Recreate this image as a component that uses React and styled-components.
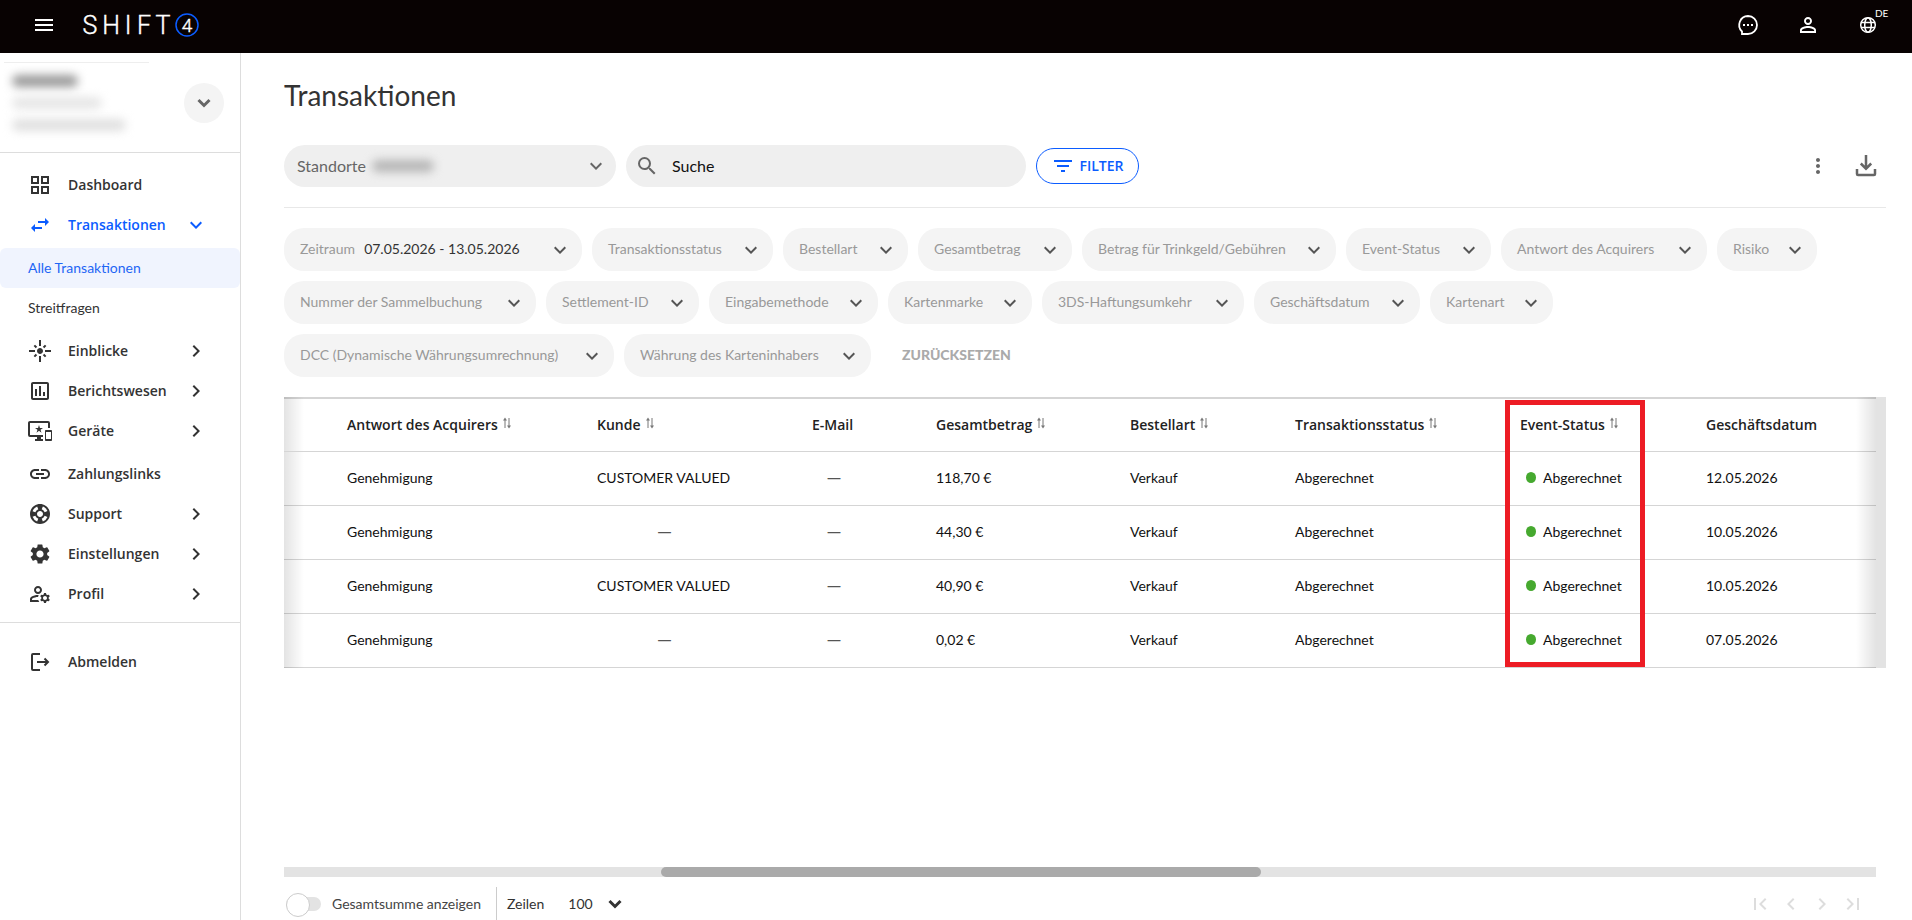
import React, { useState } from 'react';
import styled, { createGlobalStyle, css } from 'styled-components';
import {
  MdMenu,
  MdSwapHoriz,
  MdFlare,
  MdOutlineAssessment,
  MdOutlineImportantDevices,
  MdLink,
  MdOutlineSupport,
  MdSettings,
  MdOutlineManageAccounts,
  MdExpandMore,
  MdChevronRight,
  MdChevronLeft,
  MdFirstPage,
  MdLastPage,
  MdSearch,
  MdMoreVert,
  MdPersonOutline,
  MdFilterList,
} from 'react-icons/md';

const GlobalStyle = createGlobalStyle`
  * {
    box-sizing: border-box;
  }

  body {
    margin: 0;
    background: #fff;
    color: #333;
    font-family: Lato, 'Open Sans', sans-serif;
    font-size: 14px;
  }

  button, input, select {
    font: inherit;
    color: inherit;
  }

  button {
    padding: 0;
    border: none;
    background: none;
    cursor: pointer;
  }
`;

const strongText = css`
  font-family: 'Open Sans', sans-serif;
  font-weight: 600;
`;

const Page = styled.div`
  display: flex;
  flex-direction: column;
  height: 100vh;
  overflow: hidden;
`;

const Header = styled.header`
  display: flex;
  align-items: center;
  flex: none;
  height: 53px;
  padding: 0 32px 4px;
  background: #080202;
  color: #fff;
`;

const IconButton = styled.button`
  display: flex;
  align-items: center;
  justify-content: center;
  position: relative;
  width: 24px;
  height: 24px;
`;

const Logo = styled.svg`
  width: 120px;
  height: 40px;
  margin-left: 24px;
`;

const HeaderActions = styled.div`
  display: flex;
  gap: 36px;
  margin-left: auto;
`;

const Language = styled.span`
  position: absolute;
  top: -6px;
  left: 19px;
  font-size: 10px;
  line-height: 12px;
`;

const Body = styled.div`
  display: flex;
  flex: 1;
  min-height: 0;
`;

const Sidebar = styled.aside`
  flex: none;
  width: 241px;
  border-right: 1px solid #ddd;
`;

const Account = styled.div`
  display: flex;
  align-items: center;
  justify-content: space-between;
  height: 100px;
  padding: 0 16px 0 4px;
  border-bottom: 1px solid #ddd;
`;

const AccountInfo = styled.div`
  display: flex;
  flex-direction: column;
  gap: 10px;
  width: 145px;
  height: 82px;
  padding: 12px 8px;
  border-top: 1px solid #eee;
`;

const Blurred = styled.span`
  display: inline-block;
  width: ${({ $width }) => $width}px;
  height: 12px;
  border-radius: 6px;
  background: ${({ $color }) => $color};
  filter: blur(5px);
`;

const RoundButton = styled.button`
  display: flex;
  align-items: center;
  justify-content: center;
  width: 40px;
  height: 40px;
  border-radius: 50%;
  background: #f4f4f4;
  color: #666;
`;

const Nav = styled.nav`
  padding: 12px 0 8px;
  border-bottom: 1px solid #ddd;
`;

const NavGroup = styled.div`
  padding-bottom: 3px;
`;

const NavLink = styled.a`
  ${strongText}
  display: flex;
  align-items: center;
  height: 40px;
  padding: 0 32px 0 28px;
  color: ${({ $active }) => ($active ? '#0b5cff' : '#333')};
  text-decoration: none;

  svg {
    flex: none;
    width: 24px;
    height: 24px;
  }

  span {
    flex: 1;
    margin-left: 16px;
    padding-bottom: 2px;
  }
`;

const SubLink = styled.a`
  display: flex;
  align-items: center;
  height: 40px;
  padding: 0 28px 2px;
  border-radius: 6px;
  color: #333;
  text-decoration: none;

  ${({ $active }) => $active && css`
    margin-top: 3px;
    background: #f0f4fe;
    color: #1f66f5;
  `}
`;

const Logout = styled.div`
  padding-top: 19px;
`;

const Main = styled.main`
  display: flex;
  flex-direction: column;
  flex: 1;
  min-width: 0;
  padding: 24px 26px 0 43px;
`;

const Title = styled.h1`
  margin: 0 0 2px;
  font-size: 28px;
  line-height: 36px;
  font-weight: 400;
`;

const Toolbar = styled.div`
  display: flex;
  align-items: center;
  gap: 10px;
  height: 93px;
  padding-top: 10px;
  border-bottom: 1px solid #e8e8e8;
`;

const LocationButton = styled.button`
  display: flex;
  align-items: center;
  gap: 6px;
  width: 332px;
  height: 42px;
  padding: 0 8px 0 13px;
  border-radius: 21px;
  background: #efefef;
  color: #666;
  font-size: 16px;

  svg {
    margin-left: auto;
  }
`;

const SearchBox = styled.label`
  display: flex;
  align-items: center;
  gap: 13px;
  width: 400px;
  height: 42px;
  padding: 0 20px 0 9px;
  border-radius: 21px;
  background: #efefef;
  color: #666;

  input {
    flex: 1;
    min-width: 0;
    padding: 0 0 2px;
    border: none;
    outline: none;
    background: none;
    font-size: 16px;
  }

  input::placeholder {
    color: #111;
    opacity: 1;
  }
`;

const ButtonText = styled.span`
  padding-bottom: 2px;
`;

const FilterButton = styled.button`
  ${strongText}
  display: flex;
  align-items: center;
  justify-content: center;
  gap: 4px;
  width: 103px;
  height: 36px;
  border: 1px solid #0b5cff;
  border-radius: 18px;
  color: #0b5cff;
`;

const ToolbarActions = styled.div`
  display: flex;
  gap: 24px;
  margin: 0 8px 0 auto;
  color: #666;
`;

const Filters = styled.div`
  display: flex;
  flex-wrap: wrap;
  gap: 10px;
  padding: 20px 0;
`;

const Chip = styled.button`
  display: flex;
  align-items: center;
  justify-content: space-between;
  min-width: ${({ $width }) => $width}px;
  height: 43px;
  padding: 0 10px 0 16px;
  border-radius: 20px;
  background: #f4f4f4;
  color: #999;
  white-space: nowrap;

  strong {
    margin-left: 9px;
    color: #333;
    font-weight: 400;
  }

  svg {
    color: #555;
  }
`;

const ResetButton = styled.button`
  height: 43px;
  padding: 0 21px 2px;
  color: #aaa;
  font-weight: 900;
`;

const TableArea = styled.div`
  position: relative;
  flex: none;
  padding-right: 10px;
  background: linear-gradient(#e3e3e3, #e3e3e3) right / 10px 100% no-repeat;

  &::before,
  &::after {
    content: '';
    position: absolute;
    top: 0;
    bottom: 0;
    left: 0;
    width: 20px;
    background: linear-gradient(to right, rgba(0, 0, 0, 0.11), rgba(0, 0, 0, 0));
  }

  &::after {
    left: auto;
    right: 10px;
    background: linear-gradient(to left, rgba(0, 0, 0, 0.11), rgba(0, 0, 0, 0));
  }
`;

const Table = styled.table`
  width: 100%;
  table-layout: fixed;
  border-collapse: separate;
  border-spacing: 0;
  border-top: 2px solid #d5d5d5;

  th,
  td {
    height: 54px;
    padding: 0 60px 2px 20px;
    border-bottom: 1px solid #d5d5d5;
    color: #111;
    text-align: left;
    white-space: nowrap;
  }

  th {
    ${strongText}
    position: relative;
    height: 53px;
    padding-right: 0;
    color: #222;
  }
`;

const SortButton = styled.button`
  display: inline-flex;
  align-items: center;
  gap: 5px;

  svg {
    color: #777;
    margin-bottom: 2px;
  }
`;

const Highlight = styled.div`
  position: absolute;
  z-index: 1;
  top: 1px;
  left: 5px;
  width: 140px;
  height: 267px;
  border: 5px solid #ed1c24;
  pointer-events: none;
`;

const Empty = styled.div`
  font-family: 'Open Sans', sans-serif;
  text-align: center;
  color: #555;
`;

const Status = styled.span`
  display: flex;
  align-items: center;
  gap: 7px;
  padding-left: 6px;

  &::before {
    content: '';
    width: 10px;
    height: 11px;
    border-radius: 50%;
    background: #46a92f;
  }
`;

const Bottom = styled.div`
  margin-top: auto;
`;

const ScrollTrack = styled.div`
  height: 10px;
  margin-right: 10px;
  background: #e3e3e3;
`;

const ScrollThumb = styled.div`
  height: 10px;
  border-radius: 5px;
  background: #aaa;
`;

const Footer = styled.footer`
  display: flex;
  align-items: center;
  height: 43px;
  padding: 10px 21px 0 0;
`;

const Toggle = styled.label`
  display: flex;
  align-items: center;
  gap: 11px;
  height: 33px;
  padding: 0 15px 0 2px;
  border-right: 1px solid #ccc;
  color: #444;
`;

const Switch = styled.input`
  appearance: none;
  position: relative;
  width: 35px;
  height: 14px;
  margin: 0;
  border-radius: 7px;
  background: #e3e3e3;

  &::before {
    content: '';
    position: absolute;
    top: -4px;
    left: 0;
    width: 22px;
    height: 22px;
    border: 1px solid #ccc;
    border-radius: 50%;
    background: #fff;
  }

  &:checked::before {
    left: auto;
    right: 0;
  }
`;

const RowCount = styled.label`
  display: flex;
  align-items: center;
  gap: 24px;
  padding-left: 10px;
`;

const SelectWrap = styled.div`
  display: flex;
  align-items: center;

  select {
    appearance: none;
    width: 40px;
    padding: 0;
    border: none;
    background: none;
  }
`;

const Pagination = styled.div`
  display: flex;
  gap: 7px;
  margin-left: auto;
  color: #ddd;
`;

const columns = [
  { title: '', width: 43 },
  { title: 'Antwort des Acquirers', width: 250, sortable: true },
  { title: 'Kunde', width: 215, sortable: true },
  { title: 'E-Mail', width: 124 },
  { title: 'Gesamtbetrag', width: 194, sortable: true },
  { title: 'Bestellart', width: 165, sortable: true },
  { title: 'Transaktionsstatus', width: 225, sortable: true },
  { title: 'Event-Status', width: 186, sortable: true, highlighted: true },
  { title: 'Geschäftsdatum', width: 190 },
];

const transactions = [
  { customer: 'CUSTOMER VALUED', amount: '118,70 €', date: '12.05.2026' },
  { customer: '', amount: '44,30 €', date: '10.05.2026' },
  { customer: 'CUSTOMER VALUED', amount: '40,90 €', date: '10.05.2026' },
  { customer: '', amount: '0,02 €', date: '07.05.2026' },
];

const filters = [
  { label: 'Zeitraum', value: '07.05.2026 - 13.05.2026', width: 298 },
  { label: 'Transaktionsstatus', width: 181 },
  { label: 'Bestellart', width: 125 },
  { label: 'Gesamtbetrag', width: 154 },
  { label: 'Betrag für Trinkgeld/Gebühren', width: 254 },
  { label: 'Event-Status', width: 145 },
  { label: 'Antwort des Acquirers', width: 206 },
  { label: 'Risiko', width: 100 },
  { label: 'Nummer der Sammelbuchung', width: 252 },
  { label: 'Settlement-ID', width: 153 },
  { label: 'Eingabemethode', width: 169 },
  { label: 'Kartenmarke', width: 144 },
  { label: '3DS-Haftungsumkehr', width: 202 },
  { label: 'Geschäftsdatum', width: 166 },
  { label: 'Kartenart', width: 123 },
  { label: 'DCC (Dynamische Währungsumrechnung)', width: 330 },
  { label: 'Währung des Karteninhabers', width: 247 },
];

const GridIcon = () => (
  <svg viewBox="0 0 24 24" fill="none" stroke="currentColor" strokeWidth="2">
    <path d="M4 4h6v6H4zM14 4h6v6h-6zM4 14h6v6H4zM14 14h6v6h-6z" />
  </svg>
);

const LogoutIcon = () => (
  <svg viewBox="0 0 24 24" fill="none" stroke="currentColor" strokeWidth="2">
    <path d="M12 4H5a1 1 0 0 0-1 1v14a1 1 0 0 0 1 1h7M9 12h11M16.500 8.500 20 12l-3.500 3.500" />
  </svg>
);

const ChatIcon = () => (
  <svg width="24" height="24" viewBox="0 0 24 24" fill="none" stroke="currentColor" strokeWidth="1.800">
    <path d="M12 3a9 9 0 1 1 0 18H6v-2.500A9 9 0 0 1 12 3z" />
    <path d="M7 11h2v2H7zM11 11h2v2h-2zM15 11h2v2h-2z" fill="currentColor" stroke="none" />
  </svg>
);

const GlobeIcon = () => (
  <svg width="24" height="24" viewBox="0 0 24 24" fill="none" stroke="currentColor" strokeWidth="1.500">
    <circle cx="12" cy="12" r="7.300" />
    <ellipse cx="12" cy="12" rx="3.300" ry="7.300" />
    <path d="M5 9.500h14M5 14.500h14" />
  </svg>
);

const DownloadIcon = () => (
  <svg width="24" height="24" viewBox="0 0 24 24" fill="none" stroke="currentColor" strokeWidth="2.500">
    <path d="M3 15v5a1 1 0 0 0 1 1h16a1 1 0 0 0 1-1v-5M12 1v14M6.800 9.500 12 14.700 17.200 9.500" />
  </svg>
);

const SortIcon = () => (
  <svg width="8" height="12" viewBox="0 0 8 12" fill="none" stroke="currentColor">
    <path d="M2 11V2M6 1v9" />
    <path d="M0 3.500 2 .500 4 3.500zM4 8.500 6 11.500 8 8.500z" fill="currentColor" stroke="none" />
  </svg>
);

const BoldChevron = () => (
  <svg width="14" height="10" viewBox="0 0 14 10" fill="none" stroke="currentColor" strokeWidth="3">
    <path d="M1.500 2 7 7.500 12.500 2" />
  </svg>
);

const navTop = [
  { label: 'Einblicke', icon: MdFlare, expandable: true },
  { label: 'Berichtswesen', icon: MdOutlineAssessment, expandable: true },
  { label: 'Geräte', icon: MdOutlineImportantDevices, expandable: true },
];

const navBottom = [
  { label: 'Zahlungslinks', icon: MdLink },
  { label: 'Support', icon: MdOutlineSupport, expandable: true },
  { label: 'Einstellungen', icon: MdSettings, expandable: true },
  { label: 'Profil', icon: MdOutlineManageAccounts, expandable: true },
];

const NavItem = ({ label, icon: Icon, expandable, open }) => (
  <NavLink href="#" $active={open}>
    <Icon />
    <span>{label}</span>
    {open && <MdExpandMore />}
    {expandable && <MdChevronRight />}
  </NavLink>
);

const TopBar = () => (
  <Header>
    <IconButton aria-label="Menü"><MdMenu size={24} /></IconButton>
    <Logo viewBox="0 0 120 40" role="img" aria-label="SHIFT4">
      <g fill="#fff" fontFamily="Roboto, sans-serif" fontWeight="300" textAnchor="middle">
        <g fontSize="25" stroke="#fff" strokeWidth="0.400">
          <text x="10" y="29">S</text>
          <text x="31" y="29">H</text>
          <text x="48" y="29">I</text>
          <text x="64" y="29">F</text>
          <text x="83" y="29">T</text>
        </g>
        <text x="107" y="27" fontSize="19" stroke="#fff" strokeWidth="0.400">4</text>
      </g>
      <circle cx="107" cy="20" r="11" fill="none" stroke="#0b5cff" strokeWidth="1.500" />
    </Logo>
    <HeaderActions>
      <IconButton aria-label="Chat"><ChatIcon /></IconButton>
      <IconButton aria-label="Konto"><MdPersonOutline size={24} /></IconButton>
      <IconButton aria-label="Sprache">
        <GlobeIcon />
        <Language>DE</Language>
      </IconButton>
    </HeaderActions>
  </Header>
);

const SideNav = () => (
  <Sidebar>
    <Account>
      <AccountInfo>
        <Blurred $width={66} $color="#999" />
        <Blurred $width={90} $color="#e6e6e6" />
        <Blurred $width={114} $color="#e0e0e0" />
      </AccountInfo>
      <RoundButton aria-label="Konto wechseln"><BoldChevron /></RoundButton>
    </Account>
    <Nav>
      <NavGroup>
        <NavItem label="Dashboard" icon={GridIcon} />
        <NavItem label="Transaktionen" icon={MdSwapHoriz} open />
        <SubLink href="#" $active>Alle Transaktionen</SubLink>
        <SubLink href="#">Streitfragen</SubLink>
      </NavGroup>
      <NavGroup>
        {navTop.map((item) => <NavItem key={item.label} {...item} />)}
      </NavGroup>
      {navBottom.map((item) => <NavItem key={item.label} {...item} />)}
    </Nav>
    <Logout>
      <NavItem label="Abmelden" icon={LogoutIcon} />
    </Logout>
  </Sidebar>
);

const TransactionTable = () => (
  <TableArea>
    <Table>
      <colgroup>
        {columns.map(({ title, width }) => <col key={title} style={{ width }} />)}
      </colgroup>
      <thead>
        <tr>
          {columns.map(({ title, sortable, highlighted }) => (
            <th key={title}>
              {sortable ? <SortButton>{title}<SortIcon /></SortButton> : title}
              {highlighted && <Highlight />}
            </th>
          ))}
        </tr>
      </thead>
      <tbody>
        {transactions.map(({ customer, amount, date }) => (
          <tr key={amount}>
            <td />
            <td>Genehmigung</td>
            <td>{customer || <Empty>—</Empty>}</td>
            <td><Empty>—</Empty></td>
            <td>{amount}</td>
            <td>Verkauf</td>
            <td>Abgerechnet</td>
            <td><Status>Abgerechnet</Status></td>
            <td>{date}</td>
          </tr>
        ))}
      </tbody>
    </Table>
  </TableArea>
);

const App = () => {
  const [search, setSearch] = useState('');
  const [showTotal, setShowTotal] = useState(false);
  const scroll = { offset: 23.7, size: 37.7 };

  return (
    <Page>
      <GlobalStyle />
      <TopBar />
      <Body>
        <SideNav />
        <Main>
          <Title>Transaktionen</Title>
          <Toolbar>
            <LocationButton aria-haspopup="listbox">
              <ButtonText>Standorte</ButtonText>
              <Blurred $width={62} $color="#b5b5b5" />
              <MdExpandMore size={24} />
            </LocationButton>
            <SearchBox>
              <MdSearch size={24} />
              <input
                type="text"
                aria-label="Suche"
                placeholder="Suche"
                value={search}
                onChange={(e) => setSearch(e.target.value)}
              />
            </SearchBox>
            <FilterButton><MdFilterList size={24} /><ButtonText>FILTER</ButtonText></FilterButton>
            <ToolbarActions>
              <IconButton aria-label="Mehr"><MdMoreVert size={24} /></IconButton>
              <IconButton aria-label="Herunterladen"><DownloadIcon /></IconButton>
            </ToolbarActions>
          </Toolbar>
          <Filters>
            {filters.map(({ label, value, width }) => (
              <Chip key={label} $width={width} aria-haspopup="listbox">
                <ButtonText>{label}{value && <strong>{value}</strong>}</ButtonText>
                <MdExpandMore size={24} />
              </Chip>
            ))}
            <ResetButton>ZURÜCKSETZEN</ResetButton>
          </Filters>
          <TransactionTable />
          <Bottom>
            <ScrollTrack>
              <ScrollThumb style={{ width: `${scroll.size}%`, marginLeft: `${scroll.offset}%` }} />
            </ScrollTrack>
            <Footer>
              <Toggle>
                <Switch
                  type="checkbox"
                  role="switch"
                  checked={showTotal}
                  onChange={(e) => setShowTotal(e.target.checked)}
                />
                Gesamtsumme anzeigen
              </Toggle>
              <RowCount>
                Zeilen
                <SelectWrap>
                  <select defaultValue="100">
                    <option>25</option>
                    <option>50</option>
                    <option>100</option>
                  </select>
                  <BoldChevron />
                </SelectWrap>
              </RowCount>
              <Pagination>
                <IconButton aria-label="Erste Seite" disabled><MdFirstPage size={24} /></IconButton>
                <IconButton aria-label="Vorherige Seite" disabled><MdChevronLeft size={24} /></IconButton>
                <IconButton aria-label="Nächste Seite" disabled><MdChevronRight size={24} /></IconButton>
                <IconButton aria-label="Letzte Seite" disabled><MdLastPage size={24} /></IconButton>
              </Pagination>
            </Footer>
          </Bottom>
        </Main>
      </Body>
    </Page>
  );
};

export default App;
